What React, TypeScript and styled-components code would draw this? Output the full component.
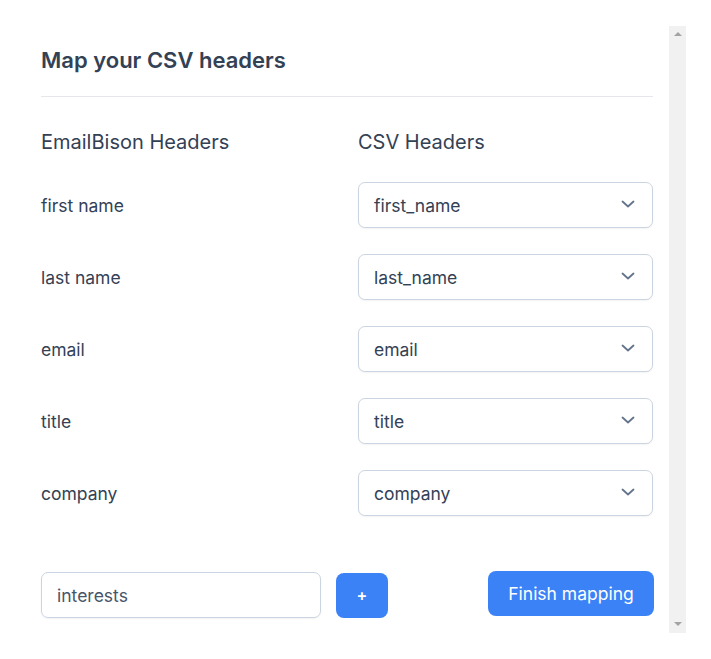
import { Fragment } from 'react';
import styled, { createGlobalStyle } from 'styled-components';

const GlobalStyle = createGlobalStyle`
  html, body {
    margin: 0;
    padding: 0;
    background: #ffffff;
  }
  body {
    font-family: Inter, "Noto Sans", "Liberation Sans", sans-serif;
    color: #334155;
  }
  * {
    box-sizing: border-box;
  }
`;

const Panel = styled.div`
  display: flex;
  margin: 26px 25px;
  height: 607px;
  background: #ffffff;
`;

const Content = styled.div`
  flex: 1;
  min-width: 0;
  padding: 20px 16px 16px;
`;

const ScrollTrack = styled.div`
  width: 17px;
  flex: none;
  display: flex;
  flex-direction: column;
  justify-content: space-between;
  background: #f1f1f1;
`;

const ScrollArrow = styled.svg`
  display: block;
  width: 17px;
  height: 17px;
  color: #a3a3a3;
`;

const Title = styled.h2`
  margin: 0;
  font-size: 22px;
  line-height: 28px;
  font-weight: 600;
  color: #334155;
  padding-bottom: 22px;
  border-bottom: 1px solid #e5e7eb;
`;

const Grid = styled.div`
  display: grid;
  grid-template-columns: 1fr 1fr;
  column-gap: 22px;
  row-gap: 26px;
  align-items: center;
  margin-top: 30px;
`;

const ColumnHead = styled.div`
  font-size: 20px;
  line-height: 28px;
  font-weight: 400;
  color: #334155;
  padding-top: 1px;
`;

const Label = styled.div`
  font-size: 17.5px;
  line-height: 24px;
  padding-top: 2px;
  color: #334155;
`;

const SelectBox = styled.div`
  display: flex;
  align-items: center;
  justify-content: space-between;
  height: 46px;
  padding: 0 16px 0 15px;
  border: 1px solid #cbd5e1;
  border-radius: 7px;
  font-size: 17.5px;
  color: #334155;
  background: #ffffff;
  box-shadow: 0 1px 2px rgba(15, 23, 42, 0.05);
`;

const Chevron = styled.svg`
  width: 14px;
  height: 8px;
  color: #64748b;
  margin-right: 1px;
  margin-top: -2px;
`;

const Footer = styled.div`
  display: flex;
  align-items: center;
  margin-top: 56px;
`;

const TextInput = styled.div`
  display: flex;
  align-items: center;
  width: 280px;
  height: 46px;
  padding: 0 15px;
  border: 1px solid #cbd5e1;
  border-radius: 7px;
  font-size: 17.5px;
  color: #475569;
  box-shadow: 0 1px 2px rgba(15, 23, 42, 0.05);
`;

const AddButton = styled.button`
  margin-left: 15px;
  width: 52px;
  height: 45px;
  border: none;
  border-radius: 8px;
  background: #3b82f6;
  color: #ffffff;
  font-family: inherit;
  font-size: 16px;
  font-weight: 600;
`;

const FinishButton = styled.button`
  margin-left: auto;
  margin-right: -1px;
  margin-top: -4px;
  height: 45px;
  width: 166px;
  padding: 0;
  border: none;
  border-radius: 8px;
  background: #3b82f6;
  color: #ffffff;
  font-family: inherit;
  font-size: 17.5px;
  font-weight: 400;
`;

const rows = [
  ['first name', 'first_name'],
  ['last name', 'last_name'],
  ['email', 'email'],
  ['title', 'title'],
  ['company', 'company'],
];

function ChevronDown() {
  return (
    <Chevron viewBox="0 0 14 8" fill="none" stroke="currentColor" strokeWidth="1.8" strokeLinecap="round" strokeLinejoin="round">
      <path d="M1.5 1.5l5.5 5 5.5-5" />
    </Chevron>
  );
}

export default function App() {
  return (
    <>
      <GlobalStyle />
      <Panel>
        <Content>
          <Title>Map your CSV headers</Title>
          <Grid>
            <ColumnHead>EmailBison Headers</ColumnHead>
            <ColumnHead>CSV Headers</ColumnHead>
            {rows.map(([label, value]) => (
              <Fragment key={label}>
                <Label>{label}</Label>
                <SelectBox>
                  <span>{value}</span>
                  <ChevronDown />
                </SelectBox>
              </Fragment>
            ))}
          </Grid>
          <Footer>
            <TextInput>interests</TextInput>
            <AddButton>+</AddButton>
            <FinishButton>Finish mapping</FinishButton>
          </Footer>
        </Content>
        <ScrollTrack>
          <ScrollArrow viewBox="0 0 17 17">
            <polygon points="5,10 13,10 9,6" fill="currentColor" />
          </ScrollArrow>
          <ScrollArrow viewBox="0 0 17 17">
            <polygon points="5,6 13,6 9,10" fill="currentColor" />
          </ScrollArrow>
        </ScrollTrack>
      </Panel>
    </>
  );
}
